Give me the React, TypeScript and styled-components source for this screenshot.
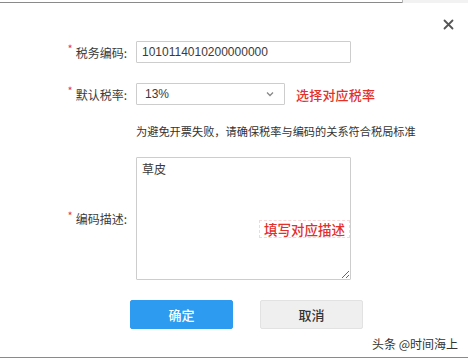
import React from "react";
import styled, { createGlobalStyle } from "styled-components";

const Global = createGlobalStyle`
  html, body { margin: 0; padding: 0; background: #fff; }
  body { font-family: "Noto Sans CJK SC", "Liberation Sans", sans-serif; color: #333; }
  * { box-sizing: border-box; }
`;

const Page = styled.div`
  width: 468px;
  height: 359px;
  display: flex;
  flex-direction: column;
  background: #fff;
  overflow: hidden;
`;

const TopStrip = styled.div`
  display: flex;
  height: 3px;
`;

const TopLeft = styled.div`
  flex: 0 0 402px;
  border-bottom: 1px solid #8a8a8a;
`;

const TopRight = styled.div`
  flex: 1;
  background: #f2f2f2;
  border-left: 1px solid #b5b5b5;
`;

const Header = styled.div`
  height: 38px;
  display: flex;
  justify-content: flex-end;
  align-items: flex-start;
  padding: 15px 14px 0 0;
`;

const CloseButton = styled.button`
  width: 12px;
  height: 12px;
  padding: 0;
  border: none;
  background: none;
  display: flex;
  align-items: center;
  justify-content: center;
`;

const Form = styled.div`
  display: flex;
  flex-direction: column;
`;

const Row = styled.div<{ $mt?: number }>`
  display: grid;
  grid-template-columns: 136px auto;
  align-items: center;
  margin-top: ${(p) => p.$mt ?? 0}px;
`;

const Label = styled.div`
  display: flex;
  justify-content: flex-end;
  align-items: center;
  padding-right: 9px;
  font-size: 12px;
  color: #3a3a3a;
  white-space: nowrap;
`;

const Star = styled.span`
  color: #e8413c;
  font-size: 11px;
  margin-right: 3px;
  position: relative;
  top: -4px;
`;

const Field = styled.div`
  display: flex;
  align-items: center;
`;

const TextInput = styled.div`
  width: 215px;
  height: 22px;
  border: 1px solid #cdcdcd;
  border-radius: 1px;
  padding-left: 5px;
  display: flex;
  align-items: center;
  font-family: "Liberation Sans", "Noto Sans CJK SC", sans-serif;
  font-size: 12px;
  color: #3a3a3a;
`;

const SelectBox = styled.div`
  width: 149px;
  height: 22px;
  border: 1px solid #cdcdcd;
  border-radius: 1px;
  padding: 0 10px 0 8px;
  display: flex;
  align-items: center;
  justify-content: space-between;
  font-family: "Liberation Sans", "Noto Sans CJK SC", sans-serif;
  font-size: 12px;
  color: #3a3a3a;
`;

const RedNote = styled.span`
  margin-left: 11px;
  color: #e2302b;
  font-size: 13px;
  font-weight: 500;
  letter-spacing: 0.2px;
`;

const Hint = styled.div`
  font-size: 11.2px;
  line-height: 14px;
  color: #333;
  white-space: nowrap;
`;

const AreaWrap = styled.div`
  position: relative;
  width: 215px;
  height: 123px;
`;

const TextArea = styled.textarea`
  width: 215px;
  height: 123px;
  border: 1px solid #cdcdcd;
  border-radius: 1px;
  padding: 4px 5px;
  font-family: "Noto Sans CJK SC", sans-serif;
  font-size: 12px;
  line-height: 14px;
  color: #3a3a3a;
  resize: both;
  outline: none;
  display: block;
`;

const Annotation = styled.div`
  position: absolute;
  left: 123px;
  top: 63px;
  width: 91px;
  height: 18px;
  border: 1px dashed #f6d6d6;
  background: #fff;
  color: #e2302b;
  font-size: 13.5px;
  font-weight: 500;
  display: flex;
  align-items: center;
  justify-content: center;
  white-space: nowrap;
`;

const Buttons = styled.div`
  display: flex;
  gap: 27px;
  padding-left: 130px;
  margin-top: 20px;
`;

const Btn = styled.button<{ $primary?: boolean }>`
  width: 103px;
  height: 29px;
  border-radius: 2px;
  border: 1px solid ${(p) => (p.$primary ? "#2d9cf0" : "#e2e2e2")};
  background: ${(p) => (p.$primary ? "#2d9cf0" : "#efefef")};
  color: ${(p) => (p.$primary ? "#fff" : "#333")};
  font-family: "Noto Sans CJK SC", sans-serif;
  font-size: 13px;
  font-weight: 500;
  padding: 0;
`;

const Watermark = styled.div`
  align-self: flex-end;
  margin: 8px 10px 0 0;
  font-size: 12px;
  line-height: 14px;
  color: #333;
  white-space: nowrap;
`;

const BottomLine = styled.div`
  margin-top: auto;
  margin-bottom: 1px;
  border-bottom: 1px solid #8a8a8a;
`;

export default function App() {
  return (
    <Page>
      <Global />
      <TopStrip>
        <TopLeft />
        <TopRight />
      </TopStrip>
      <Header>
        <CloseButton aria-label="close">
          <svg width="11" height="11" viewBox="0 0 11 11">
            <path d="M1.5 1.5 L9.5 9.5 M9.5 1.5 L1.5 9.5" stroke="#555" strokeWidth="1.8" strokeLinecap="round" />
          </svg>
        </CloseButton>
      </Header>
      <Form>
        <Row>
          <Label>
            <Star>*</Star>税务编码:
          </Label>
          <Field>
            <TextInput>1010114010200000000</TextInput>
          </Field>
        </Row>
        <Row $mt={20}>
          <Label>
            <Star>*</Star>默认税率:
          </Label>
          <Field>
            <SelectBox>
              <span>13%</span>
              <svg width="8" height="6" viewBox="0 0 8 6">
                <path d="M1 1.5 L4 4.5 L7 1.5" stroke="#888" strokeWidth="1.3" fill="none" />
              </svg>
            </SelectBox>
            <RedNote>选择对应税率</RedNote>
          </Field>
        </Row>
        <Row $mt={19}>
          <div />
          <Hint>为避免开票失败，请确保税率与编码的关系符合税局标准</Hint>
        </Row>
        <Row $mt={19}>
          <Label>
            <Star>*</Star>编码描述:
          </Label>
          <Field>
            <AreaWrap>
              <TextArea defaultValue="草皮" readOnly />
              <Annotation>填写对应描述</Annotation>
            </AreaWrap>
          </Field>
        </Row>
      </Form>
      <Buttons>
        <Btn $primary>确定</Btn>
        <Btn>取消</Btn>
      </Buttons>
      <Watermark>头条 @时间海上</Watermark>
      <BottomLine />
    </Page>
  );
}
